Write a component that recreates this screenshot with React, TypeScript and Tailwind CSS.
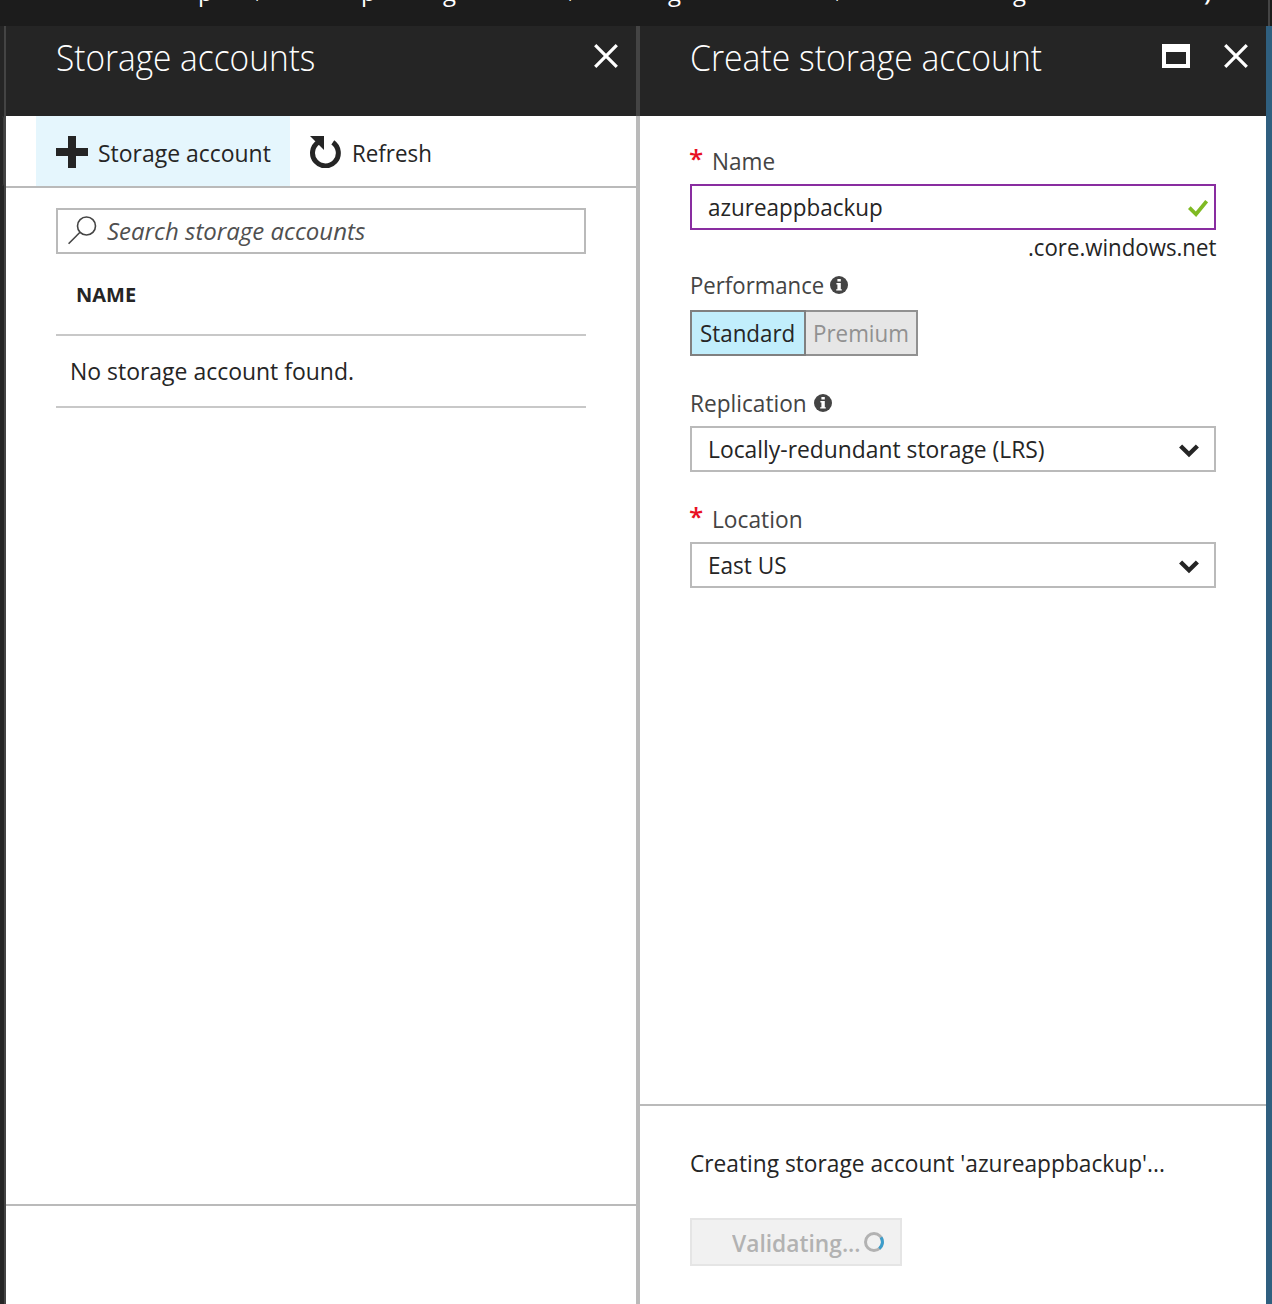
import { useLayoutEffect, useRef, useState } from 'react';
import type { ReactNode } from 'react';

/** One line of text condensed or widened to a given width. */
function Label({ width, className = '', children }: { width: number; className?: string; children: ReactNode }) {
  const ref = useRef<HTMLSpanElement>(null);
  const [scale, setScale] = useState(1);
  useLayoutEffect(() => {
    if (ref.current) setScale(width / ref.current.offsetWidth);
  }, [width]);
  return (
    <span className={`block shrink-0 whitespace-nowrap ${className}`} style={{ width }}>
      <span ref={ref} className="inline-block origin-left" style={{ transform: `scaleX(${scale})` }}>
        {children}
      </span>
    </span>
  );
}

function CloseIcon() {
  return (
    <svg className="size-6" viewBox="0 0 24 24" fill="none" stroke="#fff" strokeWidth="3.2">
      <path d="M1.2 1.2 22.8 22.8M22.8 1.2 1.2 22.8" />
    </svg>
  );
}

function InfoIcon() {
  return (
    <svg className="size-[18px] shrink-0" viewBox="0 0 18 18">
      <circle cx="9" cy="9" r="9" fill="#444" />
      <path fill="#fff" d="M7.4 3h3.4v2.6H7.4zM6.4 7h4.4v6.2h1v1.4H6.2v-1.4h1.2V8.4h-1z" />
    </svg>
  );
}

function Chevron() {
  return (
    <svg className="mt-[3px] h-[14px] w-5" viewBox="0 0 20 14" fill="none" stroke="#252525" strokeWidth="4.4">
      <path d="M1.6 2 10 10.2 18.4 2" />
    </svg>
  );
}

function Required() {
  return <span className="-mt-[6px] -ml-px w-[23px] shrink-0 text-[26px] leading-8 font-semibold text-[#e81123]">*</span>;
}

function Select({ value, width }: { value: string; width: number }) {
  return (
    <div className="flex h-[46px] items-center justify-between border-2 border-[#bababa] pr-[15px] pl-4 text-[#252525]">
      <Label width={width}>{value}</Label>
      <Chevron />
    </div>
  );
}

function Crumbs() {
  return (
    <div className="flex h-[26px] overflow-hidden bg-[#1c1c1c] text-[24px] text-white">
      <div className="-mt-[26px] flex h-9 leading-9">
        <span className="ml-[198px] w-[52px]">p</span>
        <span className="w-[111px] font-light">\</span>
        <span className="w-[82px]">p</span>
        <span className="w-[120px]">g</span>
        <span className="w-[105px] font-light">\</span>
        <span className="w-[162px]">g</span>
        <span className="w-[183px] font-light">\</span>
        <span className="w-[191px]">g</span>
        <span className="font-semibold">)</span>
      </div>
      <div className="ml-auto mr-0.5 w-0.5 bg-[#444]" />
    </div>
  );
}

export default function App() {
  return (
    <div className="flex h-[1304px] w-[1272px] flex-col overflow-hidden bg-white font-['Open_Sans','Noto_Sans',sans-serif] text-[24px] leading-8 text-[#252525]">
      <Crumbs />
      <div className="flex min-h-0 flex-1">
        <div className="w-1.5 shrink-0 border-r-2 border-[#444] bg-[#252525] pt-[89px]">
          <div className="h-[72px] rounded-r-full border-y border-r border-[#3c3c3c] border-y-transparent" />
        </div>

        <section className="flex w-[630px] flex-col">
          <header className="flex h-[90px] items-start justify-between bg-[#252525] pr-[18px] pl-[50px] text-white">
            <Label width={259} className="mt-[10px] text-[36px] leading-[44px] font-[350]">Storage accounts</Label>
            <div className="mt-[18px]"><CloseIcon /></div>
          </header>
          <div className="flex h-[72px] border-b-2 border-[#bababa] pl-[30px]">
            <button className="flex w-[254px] items-center bg-[#e5f6fd] pt-0.5 pl-5">
              <svg className="mr-[10px] size-8" viewBox="0 0 32 32"><path fill="#252525" d="M12 0h8v12h12v8H20v12h-8V20H0v-8h12z" /></svg>
              <Label width={173} className="pt-0.5">Storage account</Label>
            </button>
            <button className="flex items-center pt-0.5 pl-5">
              <svg className="mr-[10px] size-8" viewBox="0 0 32 32">
                <path d="M8.2 6.3A12.9 12.9 0 1 0 22.8 6.4" fill="none" stroke="#252525" strokeWidth="5" />
                <path d="M0 0h14v14z" fill="#252525" />
              </svg>
              <Label width={80} className="pt-0.5">Refresh</Label>
            </button>
          </div>
          <div className="flex flex-1 flex-col px-[50px] pt-5">
            <div className="flex h-[46px] items-center border-2 border-[#bababa] pl-2.5 text-[#505050]">
              <svg className="mr-2.5 mb-0.5 size-[29px]" viewBox="0 0 29 29" fill="none" stroke="#444" strokeWidth="1.6">
                <circle cx="18.5" cy="10" r="9" /><path d="M12 16.3.6 27.7" />
              </svg>
              <Label width={258} className="italic">Search storage accounts</Label>
            </div>
            <div className="flex h-[82px] items-center border-b-2 border-[#c8c8c8] pt-0.5 pl-5 text-[20px] font-bold">
              <Label width={60}>NAME</Label>
            </div>
            <div className="flex h-[72px] items-center border-b-2 border-[#c8c8c8] pl-3.5">
              <Label width={284}>No storage account found.</Label>
            </div>
          </div>
          <footer className="h-[100px] border-t-2 border-[#bababa]" />
        </section>

        <div className="w-1 shrink-0 bg-[#bababa]"><div className="h-[90px] bg-[#444]" /></div>

        <section className="flex w-[626px] flex-col">
          <header className="flex h-[90px] items-start bg-[#252525] pr-[18px] pl-[50px] text-white">
            <Label width={352} className="mt-[10px] text-[36px] leading-[44px] font-[350]">Create storage account</Label>
            <div className="mt-[18px] mr-[34px] ml-auto h-6 w-7 border-4 border-t-8 border-white" />
            <div className="mt-[18px]"><CloseIcon /></div>
          </header>
          <form className="flex flex-1 flex-col px-[50px] pt-[29px] text-[#444]">
            <div className="flex h-8 items-center"><Required /><Label width={63}>Name</Label></div>
            <div className="mt-[7px] flex h-[46px] items-center justify-between border-2 border-[#892da0] pr-1.5 pl-4 text-[#252525]">
              <Label width={175}>azureappbackup</Label>
              <svg className="mt-[3px] h-[18px] w-5" viewBox="0 0 20 18" fill="none" stroke="#7fba23" strokeWidth="3.8">
                <path d="M1.3 7.7 8 14.3 18.7 1.2" />
              </svg>
            </div>
            <div className="mt-px flex h-8 justify-end text-[#252525]"><Label width={188}>.core.windows.net</Label></div>
            <div className="mt-1.5 flex h-8 items-center gap-1.5"><Label width={134}>Performance</Label><InfoIcon /></div>
            <div className="mt-[9px] flex h-[46px]">
              <div className="flex w-[116px] items-center border-2 border-[#808080] bg-[#c1eefc] pl-2 text-[#252525]"><Label width={95}>Standard</Label></div>
              <div className="flex w-[112px] items-center border-2 border-l-0 border-[#919191] bg-[#e6e6e6] pl-[7px] text-[#919191]"><Label width={96}>Premium</Label></div>
            </div>
            <div className="mt-[31px] mb-[7px] flex h-8 items-center gap-[7px]"><Label width={117}>Replication</Label><InfoIcon /></div>
            <Select value="Locally-redundant storage (LRS)" width={337} />
            <div className="mt-[31px] mb-[7px] flex h-8 items-center"><Required /><Label width={91}>Location</Label></div>
            <Select value="East US" width={79} />
          </form>
          <footer className="h-[200px] border-t-2 border-[#bababa] px-[50px] pt-[41px]">
            <Label width={475}>Creating storage account 'azureappbackup'...</Label>
            <button className="mt-[39px] flex h-12 w-[212px] items-center border-2 border-[#e5e5e5] bg-[#f1f1f1] pl-10 font-semibold text-[#b2b2b2]">
              <Label width={129} className="pt-0.5">Validating...</Label>
              <svg className="ml-[3px] size-5" viewBox="0 0 20 20" fill="none" strokeWidth="3">
                <circle cx="10" cy="10" r="8.5" stroke="#b2b2b2" />
                <path d="M17 5.3A8.5 8.5 0 0 1 15.3 16.6" stroke="#3c9dcb" />
              </svg>
            </button>
          </footer>
        </section>

        <div className="flex-1 bg-[#2f5f7f]" />
      </div>
    </div>
  );
}
